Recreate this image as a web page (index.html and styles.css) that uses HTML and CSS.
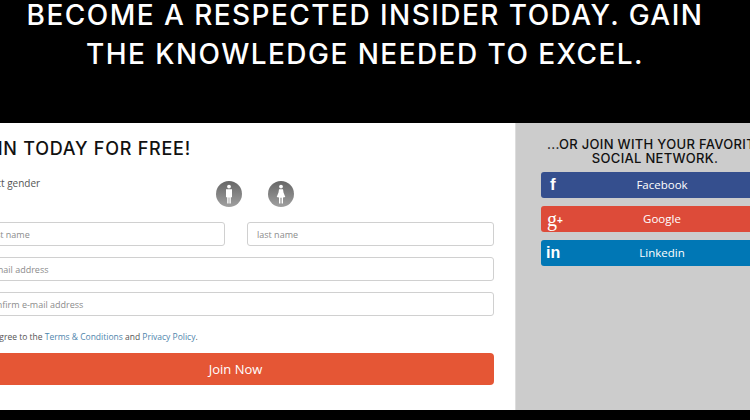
FILE: index.html
```html
<!DOCTYPE html>
<html lang="en">
<head>
    <meta charset="UTF-8">
    <meta name="viewport" content="width=device-width, initial-scale=1.0">
    <title>Join Today</title>
    <link rel="stylesheet" href="styles.css">
</head>
<body>
    <div class="hero">
        <h1>Become a respected insider today. Gain<br>the knowledge needed to excel.</h1>
    </div>
    <div class="signup">
        <form class="join-form">
            <h2>Join today for free!</h2>
            <div class="gender-row">
                <span class="gender-label">Select gender</span>
                <div class="gender-icons">
                    <svg class="gender-icon" viewBox="0 0 26 26">
                        <defs>
                            <linearGradient id="disc" x1="0" y1="0" x2="0" y2="1">
                                <stop offset="0" stop-color="#666"/>
                                <stop offset="1" stop-color="#a0a0a0"/>
                            </linearGradient>
                        </defs>
                        <circle cx="13" cy="13" r="13" fill="url(#disc)"/>
                        <circle cx="13" cy="5.6" r="1.9" fill="#fff"/>
                        <path d="M10 8.2h6v8h-1.2v6.4h-1.4v-6.2h-.8v6.2h-1.4v-6.4H10z" fill="#fff"/>
                    </svg>
                    <svg class="gender-icon" viewBox="0 0 26 26">
                        <circle cx="13" cy="13" r="13" fill="url(#disc)"/>
                        <circle cx="13" cy="5.6" r="1.9" fill="#fff"/>
                        <path d="M11 8.2h4l.5 3.4 1.8 4.4-2.3.6v6h-1.4v-5.8h-1.2v5.8H11v-6l-2.3-.6 1.8-4.4z" fill="#fff"/>
                    </svg>
                </div>
            </div>
            <div class="name-row">
                <input class="field first-name" type="text" placeholder="first name">
                <input class="field" type="text" placeholder="last name">
            </div>
            <input class="field" type="email" placeholder="e-mail address">
            <input class="field" type="email" placeholder="confirm e-mail address">
            <p class="terms">I agree to the <a href="#">Terms &amp; Conditions</a> and <a href="#">Privacy Policy</a>.</p>
            <button class="join-btn" type="button">Join Now</button>
        </form>
        <div class="social">
            <h3>...or join with your favorite<br>social network.</h3>
            <a class="social-btn facebook" href="#">
                <span class="social-mark mark-f">f</span>Facebook
            </a>
            <a class="social-btn google" href="#">
                <span class="social-mark mark-g">g<sup>+</sup></span>Google
            </a>
            <a class="social-btn linkedin" href="#">
                <span class="social-mark mark-in">in</span>Linkedin
            </a>
        </div>
    </div>
</body>
</html>
```

FILE: styles.css
```css
* {
    margin: 0;
    padding: 0;
    box-sizing: border-box;
}
body {
    width: 750px;
    height: 420px;
    overflow: hidden;
    background: #000;
    font-family: 'Open Sans', sans-serif;
}
.hero {
    height: 123px;
    padding-right: 20px;
    overflow: hidden;
}
.hero h1 {
    color: #fff;
    font-family: 'Inter', sans-serif;
    font-size: 28px;
    font-weight: 500;
    line-height: 39px;
    text-align: center;
    text-transform: uppercase;
    white-space: nowrap;
    letter-spacing: 1.45px;
    margin-top: -4px;
}
.signup {
    display: flex;
    width: 830px;
    height: 287px;
    margin-left: -45px;
}
.join-form {
    width: 561px;
    flex-shrink: 0;
    background: #fff;
    border-right: 1px solid #ddd;
    padding: 15px 21px 0 22px;
    display: flex;
    flex-direction: column;
}
.join-form h2 {
    font-family: 'Inter', sans-serif;
    font-size: 18px;
    font-weight: 500;
    line-height: 22px;
    color: #111;
    text-transform: uppercase;
    letter-spacing: 0.75px;
    margin-left: -5px;
}
.gender-row {
    display: flex;
    height: 49px;
    margin-top: 8px;
    margin-bottom: 5px;
}
.gender-label {
    font-size: 10px;
    line-height: 14px;
    margin-top: 8px;
    color: #555;
    width: 239px;
}
.gender-icons {
    display: flex;
    gap: 26px;
    padding-top: 13px;
}
.gender-icon {
    width: 26px;
    height: 26px;
}
.name-row {
    display: flex;
    justify-content: space-between;
}
.name-row .field {
    width: 247px;
}
.name-row .first-name {
    width: 248px;
}
.field {
    height: 24px;
    padding: 0 9px;
    border: 1px solid #d0d0d0;
    border-radius: 3px;
    font-family: 'Open Sans', sans-serif;
    font-size: 9px;
    color: #555;
    margin-bottom: 11px;
    outline: none;
}
.field::placeholder {
    color: #8c8c8c;
}
.terms {
    font-size: 8.5px;
    line-height: 12px;
    color: #555;
    margin-top: 4px;
    padding-left: 13px;
}
.terms a {
    color: #4f86ad;
    text-decoration: none;
}
.join-btn {
    height: 32px;
    margin-top: 10px;
    border: none;
    border-radius: 4px;
    background: #e55635;
    color: #fff;
    font-family: 'Open Sans', sans-serif;
    font-size: 13px;
}
.social {
    flex: 1;
    background: #ccc;
    padding: 14px 0 0 25px;
}
.social h3 {
    width: 228px;
    font-family: 'Inter', sans-serif;
    font-size: 13px;
    font-weight: 500;
    line-height: 14px;
    color: #111;
    text-align: center;
    text-transform: uppercase;
    white-space: nowrap;
    letter-spacing: 0.3px;
    margin-bottom: 7px;
}
.social-btn {
    position: relative;
    display: block;
    width: 242px;
    height: 26px;
    margin-bottom: 8px;
    border-radius: 3px;
    color: #fff;
    font-size: 11.5px;
    line-height: 26px;
    text-align: center;
    text-decoration: none;
}
.facebook {
    background: #354f8e;
}
.google {
    background: #dd4b39;
}
.linkedin {
    background: #0077b5;
}
.social-mark {
    position: absolute;
    top: 0;
    left: 8px;
    font-weight: bold;
    line-height: 26px;
}
.mark-f {
    font-family: 'Liberation Sans', sans-serif;
    font-size: 17px;
    left: 9px;
}
.mark-g {
    font-family: 'Liberation Serif', serif;
    font-size: 20px;
    font-weight: normal;
    left: 6px;
}
.mark-g sup {
    font-family: 'Liberation Sans', sans-serif;
    font-size: 10px;
    font-weight: bold;
    vertical-align: 2px;
    line-height: 0;
}
.mark-in {
    font-family: 'Liberation Sans', sans-serif;
    font-size: 16px;
    left: 5px;
}
```
